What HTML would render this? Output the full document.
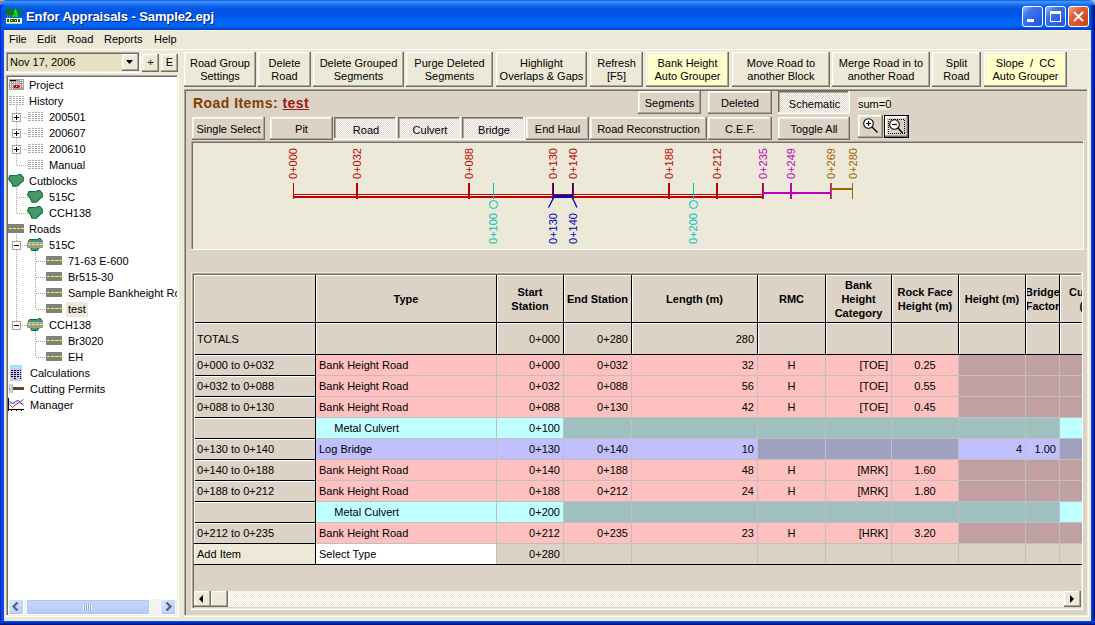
<!DOCTYPE html><html><head><meta charset="utf-8"><style>
*{box-sizing:border-box}
body{margin:0;width:1095px;height:625px;position:relative;overflow:hidden;background:#ECE9D8;font-family:"Liberation Sans",sans-serif;font-size:11px;color:#000}
.a{position:absolute}
.t{position:absolute;white-space:nowrap;line-height:13px}
.btn{position:absolute;background:#ECE9D8;box-shadow:inset -1px -1px #716F64,inset -2px -2px #ACA899,inset 1px 1px #FFFFFF,inset 2px 2px #F1EFE2;text-align:center;line-height:13px;white-space:nowrap}
.pbtn{background:#DCD2C6}
.dn{box-shadow:inset -1px -1px #FFFFFF,inset -2px -2px #F1EFE2,inset 1px 1px #716F64,inset 2px 2px #ACA899;
 background-color:#F4F2EA;background-image:repeating-conic-gradient(#FFFFFF 0 25%,#DCD2C6 0 50%);background-size:2px 2px}
.sunk{position:absolute;box-shadow:inset -1px -1px #FFFFFF,inset -2px -2px #F1EFE2,inset 1px 1px #ACA899,inset 2px 2px #716F64}
</style></head><body>

<div class="a" style="left:0;top:0;width:8px;height:8px;background:linear-gradient(#A8BCE0 0 1px,#E86838 1px)"></div>
<div class="a" style="left:1087px;top:0;width:8px;height:8px;background:#A4B4D8"></div>
<div class="a" style="left:0;top:0;width:1095px;height:30px;background:linear-gradient(#0A3FD0 0px,#3A8CFF 1px,#3D95FF 2px,#1F78F4 4px,#0A5EE6 7px,#0054E3 10px,#0055E4 16px,#0062F2 19px,#0067F8 23px,#0064F4 26px,#0050DE 28px,#003CC8 30px);border-radius:6px 6px 0 0"></div>
<div class="a" style="left:0;top:30px;width:4px;height:595px;background:linear-gradient(90deg,#0020C8 0 1px,#0848E8 1px 3px,#0050F0 3px 4px)"></div>
<div class="a" style="left:1091px;top:30px;width:4px;height:595px;background:linear-gradient(90deg,#0048E8 0 1px,#0030C8 1px 2px,#0020A8 2px 3px,#001488 3px 4px)"></div>
<div class="a" style="left:0;top:621px;width:1095px;height:4px;background:linear-gradient(#0048E8 0 1px,#0034C8 1px 2px,#0024A8 2px 3px,#001488 3px 4px)"></div>
<div class="a" style="left:0;top:5px;width:4px;height:25px;background:linear-gradient(90deg,#0028C0 0 1px,#0850E8 1px 3px,#0050E0 3px 4px)"></div>
<div class="a" style="left:1089px;top:5px;width:6px;height:25px;background:linear-gradient(90deg,rgba(0,80,230,0) 0,#0044D8 2px,#0030C0 3px,#0020A0 4px,#001888 6px)"></div>
<svg class="a" style="left:6px;top:8px" width="17" height="17" viewBox="0 0 17 17" shape-rendering="crispEdges">
<g fill="#0A7A1A"><rect x="1" y="0" width="1" height="1"/><rect x="0" y="1" width="3" height="6"/><rect x="3" y="1" width="1" height="1"/><rect x="2" y="2" width="3" height="5"/><rect x="6" y="0" width="1" height="1"/><rect x="5" y="1" width="3" height="7"/><rect x="13" y="0" width="1" height="1"/><rect x="12" y="1" width="3" height="6"/><rect x="15" y="4" width="1" height="2"/></g>
<g fill="#18D018"><rect x="9" y="1" width="1" height="1"/><rect x="8" y="2" width="3" height="6"/><rect x="10" y="5" width="2" height="4"/><rect x="6" y="7" width="2" height="2"/></g>
<g fill="#A07828"><rect x="1" y="7" width="1" height="3"/><rect x="3" y="7" width="1" height="3"/><rect x="6" y="9" width="1" height="1"/><rect x="9" y="8" width="1" height="2"/></g>
<rect x="0" y="10" width="16" height="6" fill="#FFFFFF"/><rect x="0" y="15" width="16" height="1" fill="#D8C8A8"/>
<g fill="#007A00"><rect x="1" y="11" width="2" height="3"/><rect x="4" y="11" width="7" height="3"/><rect x="12" y="11" width="2" height="3"/></g>
<rect x="5" y="12" width="1" height="1" fill="#fff"/><rect x="9" y="12" width="1" height="1" fill="#fff"/>
</svg>
<div class="t" style="left:26px;top:9px;font-size:13px;font-weight:bold;color:#fff;line-height:15px;text-shadow:1px 1px #0A1E80;letter-spacing:-0.1px">Enfor Appraisals - Sample2.epj</div>
<div class="a" style="left:1022px;top:6px;width:21px;height:21px;border:1px solid #fff;border-radius:3px;background:linear-gradient(135deg,#9DB9F9 0%,#3C75F0 30%,#2C62E8 70%,#2456D8 100%)"></div>
<div class="a" style="left:1045px;top:6px;width:21px;height:21px;border:1px solid #fff;border-radius:3px;background:linear-gradient(135deg,#9DB9F9 0%,#3C75F0 30%,#2C62E8 70%,#2456D8 100%)"></div>
<div class="a" style="left:1068px;top:6px;width:21px;height:21px;border:1px solid #fff;border-radius:3px;background:linear-gradient(135deg,#F0A088 0%,#E0603A 35%,#D84E22 70%,#C84010 100%)"></div>
<div class="a" style="left:1027px;top:19px;width:7px;height:3px;background:#fff"></div>
<div class="a" style="left:1050px;top:11px;width:11px;height:11px;border:1px solid #fff;border-top-width:3px"></div>
<svg class="a" style="left:1073px;top:11px" width="11" height="11"><path d="M1 1L10 10M10 1L1 10" stroke="#fff" stroke-width="2"/></svg>
<div class="a" style="left:4px;top:30px;width:1087px;height:1px;background:#F8F4E0"></div>
<div class="t" style="left:9px;top:33px">File</div>
<div class="t" style="left:37px;top:33px">Edit</div>
<div class="t" style="left:67px;top:33px">Road</div>
<div class="t" style="left:104px;top:33px">Reports</div>
<div class="t" style="left:154px;top:33px">Help</div>
<div class="a" style="left:4px;top:49px;width:1087px;height:1px;background:#FFFFFF"></div>
<div class="sunk" style="left:6px;top:52px;width:135px;height:21px;background:#E6E1C3"></div>
<div class="t" style="left:10px;top:56px">Nov 17, 2006</div>
<div class="btn" style="left:122px;top:54px;width:17px;height:17px"></div>
<svg class="a" style="left:126px;top:60px" width="9" height="5"><path d="M0 0H7L3.5 4Z" fill="#000"/></svg>
<div class="btn" style="left:142px;top:54px;width:17px;height:18px;line-height:16px">+</div>
<div class="btn" style="left:161px;top:54px;width:17px;height:18px;line-height:16px">E</div>
<div class="sunk" style="left:6px;top:75px;width:173px;height:542px;background:#FFFFFF"></div>
<div class="btn" style="left:184px;top:52px;width:72px;height:35px;background:#ECE9D8;padding-top:5px">Road Group<br>Settings</div>
<div class="btn" style="left:258px;top:52px;width:53px;height:35px;background:#ECE9D8;padding-top:5px">Delete<br>Road</div>
<div class="btn" style="left:313px;top:52px;width:91px;height:35px;background:#ECE9D8;padding-top:5px">Delete Grouped<br>Segments</div>
<div class="btn" style="left:406px;top:52px;width:87px;height:35px;background:#ECE9D8;padding-top:5px">Purge Deleted<br>Segments</div>
<div class="btn" style="left:496px;top:52px;width:91px;height:35px;background:#ECE9D8;padding-top:5px">Highlight<br>Overlaps &amp; Gaps</div>
<div class="btn" style="left:590px;top:52px;width:53px;height:35px;background:#ECE9D8;padding-top:5px">Refresh<br>[F5]</div>
<div class="btn" style="left:646px;top:52px;width:83px;height:35px;background:#FFFFCC;padding-top:5px">Bank Height<br>Auto Grouper</div>
<div class="btn" style="left:732px;top:52px;width:98px;height:35px;background:#ECE9D8;padding-top:5px">Move Road to<br>another Block</div>
<div class="btn" style="left:832px;top:52px;width:98px;height:35px;background:#ECE9D8;padding-top:5px">Merge Road in to<br>another Road</div>
<div class="btn" style="left:932px;top:52px;width:49px;height:35px;background:#ECE9D8;padding-top:5px">Split<br>Road</div>
<div class="btn" style="left:984px;top:52px;width:83px;height:35px;background:#FFFFCC;padding-top:5px">Slope&nbsp; /&nbsp; CC<br>Auto Grouper</div>
<div class="a" style="left:184px;top:89px;width:905px;height:528px;background:#DCD2C6;box-shadow:inset -1px -1px #FFFFFF,inset -2px -2px #F1EFE2,inset 1px 1px #ACA899,inset 2px 2px #716F64"></div>
<div class="t" style="left:193px;top:96px;font-size:14px;font-weight:bold;color:#804000;line-height:15px;letter-spacing:0.45px">Road Items: <span style="color:#A01818;text-decoration:underline">test</span></div>
<div class="btn pbtn" style="left:192px;top:117px;width:73px;height:23px;padding-top:6px;padding-left:0px">Single Select</div>
<div class="btn pbtn" style="left:270px;top:117px;width:63px;height:23px;padding-top:6px;padding-left:0px">Pit</div>
<div class="btn pbtn dn" style="left:334px;top:117px;width:63px;height:23px;padding-top:7px;padding-left:1px">Road</div>
<div class="btn pbtn dn" style="left:398px;top:117px;width:63px;height:23px;padding-top:7px;padding-left:1px">Culvert</div>
<div class="btn pbtn dn" style="left:462px;top:117px;width:63px;height:23px;padding-top:7px;padding-left:1px">Bridge</div>
<div class="btn pbtn" style="left:526px;top:117px;width:63px;height:23px;padding-top:6px;padding-left:0px">End Haul</div>
<div class="btn pbtn" style="left:590px;top:117px;width:117px;height:23px;padding-top:6px;padding-left:0px">Road Reconstruction</div>
<div class="btn pbtn" style="left:708px;top:117px;width:64px;height:23px;padding-top:6px;padding-left:0px">C.E.F.</div>
<div class="btn pbtn" style="left:778px;top:117px;width:72px;height:23px;padding-top:6px;padding-left:0px">Toggle All</div>
<div class="btn pbtn" style="left:638px;top:91px;width:63px;height:23px;padding-top:6px;padding-left:0px">Segments</div>
<div class="btn pbtn" style="left:708px;top:91px;width:64px;height:23px;padding-top:6px;padding-left:0px">Deleted</div>
<div class="btn pbtn dn" style="left:778px;top:91px;width:72px;height:23px;padding-top:7px;padding-left:1px">Schematic</div>
<div class="t" style="left:858px;top:97px;width:32px;height:13px;background:#ECE9D8;line-height:15px">sum=0</div>
<div class="btn pbtn" style="left:858px;top:115px;width:25px;height:23px"></div>
<svg class="a" style="left:858px;top:115px" width="25" height="23"><circle cx="10.5" cy="8.5" r="4.8" fill="#fff" stroke="#000" stroke-width="1.1"/><path d="M8 8.5H13M10.5 6V11" stroke="#000" stroke-width="1.2"/><path d="M14 12L19.5 17.5" stroke="#000" stroke-width="1.3"/></svg>
<div class="a" style="left:884px;top:115px;width:25px;height:23px;background:#000"></div>
<div class="btn pbtn" style="left:885px;top:116px;width:23px;height:21px"></div>
<svg class="a" style="left:884px;top:115px" width="25" height="23"><rect x="4.5" y="4.5" width="16" height="14" fill="none" stroke="#000" stroke-width="1" stroke-dasharray="1 1" shape-rendering="crispEdges"/><circle cx="10.5" cy="9.5" r="4.8" fill="#fff" stroke="#000" stroke-width="1.1"/><path d="M8 9.5H13" stroke="#000" stroke-width="1.2"/><path d="M14 13L18.5 18" stroke="#000" stroke-width="1.3"/></svg>
<div class="sunk" style="left:191px;top:141px;width:893px;height:109px;background:#ECE9D8;box-shadow:inset -1px -1px #FFFFFF,inset 1px 1px #ACA899,inset 2px 2px #716F64"></div>
<div class="a" style="left:0;top:0;width:177px;height:598px;overflow:hidden">
<svg class="a" style="left:9px;top:79px" width="15" height="11" viewBox="0 0 15 11" shape-rendering="crispEdges"><rect x="0" y="0" width="15" height="11" fill="#A4A4A4"/><rect x="11" y="1" width="1" height="1" fill="#fff"/><rect x="13" y="1" width="1" height="1" fill="#fff"/><rect x="1" y="3" width="1" height="1" fill="#fff"/><rect x="3" y="3" width="1" height="1" fill="#fff"/><rect x="5" y="3" width="1" height="1" fill="#fff"/><rect x="7" y="3" width="1" height="1" fill="#fff"/><rect x="9" y="3" width="1" height="1" fill="#fff"/><rect x="11" y="3" width="1" height="1" fill="#fff"/><rect x="13" y="3" width="1" height="1" fill="#fff"/><rect x="1" y="5" width="1" height="1" fill="#fff"/><rect x="3" y="5" width="1" height="1" fill="#fff"/><rect x="5" y="5" width="1" height="1" fill="#fff"/><rect x="7" y="5" width="1" height="1" fill="#fff"/><rect x="9" y="5" width="1" height="1" fill="#fff"/><rect x="11" y="5" width="1" height="1" fill="#fff"/><rect x="13" y="5" width="1" height="1" fill="#fff"/><rect x="1" y="7" width="1" height="1" fill="#fff"/><rect x="3" y="7" width="1" height="1" fill="#fff"/><rect x="11" y="7" width="1" height="1" fill="#fff"/><rect x="13" y="7" width="1" height="1" fill="#fff"/><rect x="1" y="9" width="1" height="1" fill="#fff"/><rect x="3" y="9" width="1" height="1" fill="#fff"/><rect x="1" y="1" width="6" height="1" fill="#000"/><rect x="5" y="6" width="5" height="3" fill="#F00000"/><rect x="4" y="7" width="1" height="1" fill="#F00000"/><rect x="10" y="7" width="1" height="1" fill="#F00000"/><rect x="7" y="7" width="1" height="1" fill="#fff"/></svg>
<div class="t" style="left:29px;top:78px;line-height:15px">Project</div>
<svg class="a" style="left:9px;top:96px" width="16" height="10" viewBox="0 0 16 10" shape-rendering="crispEdges"><rect x="0" y="0" width="3" height="1" fill="#ABABAB"/><rect x="4" y="0" width="2" height="1" fill="#ABABAB"/><rect x="7" y="0" width="2" height="1" fill="#ABABAB"/><rect x="10" y="0" width="2" height="1" fill="#ABABAB"/><rect x="13" y="0" width="2" height="1" fill="#ABABAB"/><rect x="0" y="2" width="3" height="1" fill="#ABABAB"/><rect x="4" y="2" width="2" height="1" fill="#ABABAB"/><rect x="7" y="2" width="2" height="1" fill="#ABABAB"/><rect x="10" y="2" width="2" height="1" fill="#ABABAB"/><rect x="13" y="2" width="2" height="1" fill="#ABABAB"/><rect x="0" y="4" width="3" height="1" fill="#ABABAB"/><rect x="4" y="4" width="2" height="1" fill="#ABABAB"/><rect x="7" y="4" width="2" height="1" fill="#ABABAB"/><rect x="10" y="4" width="2" height="1" fill="#ABABAB"/><rect x="13" y="4" width="2" height="1" fill="#ABABAB"/><rect x="0" y="6" width="3" height="1" fill="#ABABAB"/><rect x="4" y="6" width="2" height="1" fill="#ABABAB"/><rect x="7" y="6" width="2" height="1" fill="#ABABAB"/><rect x="10" y="6" width="2" height="1" fill="#ABABAB"/><rect x="13" y="6" width="2" height="1" fill="#ABABAB"/><rect x="0" y="8" width="3" height="1" fill="#ABABAB"/><rect x="4" y="8" width="2" height="1" fill="#ABABAB"/><rect x="7" y="8" width="2" height="1" fill="#ABABAB"/><rect x="10" y="8" width="2" height="1" fill="#ABABAB"/><rect x="13" y="8" width="2" height="1" fill="#ABABAB"/></svg>
<div class="t" style="left:29px;top:94px;line-height:15px">History</div>
<svg class="a" style="left:28px;top:112px" width="16" height="10" viewBox="0 0 16 10" shape-rendering="crispEdges"><rect x="0" y="0" width="3" height="1" fill="#ABABAB"/><rect x="4" y="0" width="2" height="1" fill="#ABABAB"/><rect x="7" y="0" width="2" height="1" fill="#ABABAB"/><rect x="10" y="0" width="2" height="1" fill="#ABABAB"/><rect x="13" y="0" width="2" height="1" fill="#ABABAB"/><rect x="0" y="2" width="3" height="1" fill="#ABABAB"/><rect x="4" y="2" width="2" height="1" fill="#ABABAB"/><rect x="7" y="2" width="2" height="1" fill="#ABABAB"/><rect x="10" y="2" width="2" height="1" fill="#ABABAB"/><rect x="13" y="2" width="2" height="1" fill="#ABABAB"/><rect x="0" y="4" width="3" height="1" fill="#ABABAB"/><rect x="4" y="4" width="2" height="1" fill="#ABABAB"/><rect x="7" y="4" width="2" height="1" fill="#ABABAB"/><rect x="10" y="4" width="2" height="1" fill="#ABABAB"/><rect x="13" y="4" width="2" height="1" fill="#ABABAB"/><rect x="0" y="6" width="3" height="1" fill="#ABABAB"/><rect x="4" y="6" width="2" height="1" fill="#ABABAB"/><rect x="7" y="6" width="2" height="1" fill="#ABABAB"/><rect x="10" y="6" width="2" height="1" fill="#ABABAB"/><rect x="13" y="6" width="2" height="1" fill="#ABABAB"/><rect x="0" y="8" width="3" height="1" fill="#ABABAB"/><rect x="4" y="8" width="2" height="1" fill="#ABABAB"/><rect x="7" y="8" width="2" height="1" fill="#ABABAB"/><rect x="10" y="8" width="2" height="1" fill="#ABABAB"/><rect x="13" y="8" width="2" height="1" fill="#ABABAB"/></svg>
<div class="t" style="left:49px;top:110px;line-height:15px">200501</div>
<svg class="a" style="left:28px;top:128px" width="16" height="10" viewBox="0 0 16 10" shape-rendering="crispEdges"><rect x="0" y="0" width="3" height="1" fill="#ABABAB"/><rect x="4" y="0" width="2" height="1" fill="#ABABAB"/><rect x="7" y="0" width="2" height="1" fill="#ABABAB"/><rect x="10" y="0" width="2" height="1" fill="#ABABAB"/><rect x="13" y="0" width="2" height="1" fill="#ABABAB"/><rect x="0" y="2" width="3" height="1" fill="#ABABAB"/><rect x="4" y="2" width="2" height="1" fill="#ABABAB"/><rect x="7" y="2" width="2" height="1" fill="#ABABAB"/><rect x="10" y="2" width="2" height="1" fill="#ABABAB"/><rect x="13" y="2" width="2" height="1" fill="#ABABAB"/><rect x="0" y="4" width="3" height="1" fill="#ABABAB"/><rect x="4" y="4" width="2" height="1" fill="#ABABAB"/><rect x="7" y="4" width="2" height="1" fill="#ABABAB"/><rect x="10" y="4" width="2" height="1" fill="#ABABAB"/><rect x="13" y="4" width="2" height="1" fill="#ABABAB"/><rect x="0" y="6" width="3" height="1" fill="#ABABAB"/><rect x="4" y="6" width="2" height="1" fill="#ABABAB"/><rect x="7" y="6" width="2" height="1" fill="#ABABAB"/><rect x="10" y="6" width="2" height="1" fill="#ABABAB"/><rect x="13" y="6" width="2" height="1" fill="#ABABAB"/><rect x="0" y="8" width="3" height="1" fill="#ABABAB"/><rect x="4" y="8" width="2" height="1" fill="#ABABAB"/><rect x="7" y="8" width="2" height="1" fill="#ABABAB"/><rect x="10" y="8" width="2" height="1" fill="#ABABAB"/><rect x="13" y="8" width="2" height="1" fill="#ABABAB"/></svg>
<div class="t" style="left:49px;top:126px;line-height:15px">200607</div>
<svg class="a" style="left:28px;top:144px" width="16" height="10" viewBox="0 0 16 10" shape-rendering="crispEdges"><rect x="0" y="0" width="3" height="1" fill="#ABABAB"/><rect x="4" y="0" width="2" height="1" fill="#ABABAB"/><rect x="7" y="0" width="2" height="1" fill="#ABABAB"/><rect x="10" y="0" width="2" height="1" fill="#ABABAB"/><rect x="13" y="0" width="2" height="1" fill="#ABABAB"/><rect x="0" y="2" width="3" height="1" fill="#ABABAB"/><rect x="4" y="2" width="2" height="1" fill="#ABABAB"/><rect x="7" y="2" width="2" height="1" fill="#ABABAB"/><rect x="10" y="2" width="2" height="1" fill="#ABABAB"/><rect x="13" y="2" width="2" height="1" fill="#ABABAB"/><rect x="0" y="4" width="3" height="1" fill="#ABABAB"/><rect x="4" y="4" width="2" height="1" fill="#ABABAB"/><rect x="7" y="4" width="2" height="1" fill="#ABABAB"/><rect x="10" y="4" width="2" height="1" fill="#ABABAB"/><rect x="13" y="4" width="2" height="1" fill="#ABABAB"/><rect x="0" y="6" width="3" height="1" fill="#ABABAB"/><rect x="4" y="6" width="2" height="1" fill="#ABABAB"/><rect x="7" y="6" width="2" height="1" fill="#ABABAB"/><rect x="10" y="6" width="2" height="1" fill="#ABABAB"/><rect x="13" y="6" width="2" height="1" fill="#ABABAB"/><rect x="0" y="8" width="3" height="1" fill="#ABABAB"/><rect x="4" y="8" width="2" height="1" fill="#ABABAB"/><rect x="7" y="8" width="2" height="1" fill="#ABABAB"/><rect x="10" y="8" width="2" height="1" fill="#ABABAB"/><rect x="13" y="8" width="2" height="1" fill="#ABABAB"/></svg>
<div class="t" style="left:49px;top:142px;line-height:15px">200610</div>
<svg class="a" style="left:28px;top:160px" width="16" height="10" viewBox="0 0 16 10" shape-rendering="crispEdges"><rect x="0" y="0" width="3" height="1" fill="#ABABAB"/><rect x="4" y="0" width="2" height="1" fill="#ABABAB"/><rect x="7" y="0" width="2" height="1" fill="#ABABAB"/><rect x="10" y="0" width="2" height="1" fill="#ABABAB"/><rect x="13" y="0" width="2" height="1" fill="#ABABAB"/><rect x="0" y="2" width="3" height="1" fill="#ABABAB"/><rect x="4" y="2" width="2" height="1" fill="#ABABAB"/><rect x="7" y="2" width="2" height="1" fill="#ABABAB"/><rect x="10" y="2" width="2" height="1" fill="#ABABAB"/><rect x="13" y="2" width="2" height="1" fill="#ABABAB"/><rect x="0" y="4" width="3" height="1" fill="#ABABAB"/><rect x="4" y="4" width="2" height="1" fill="#ABABAB"/><rect x="7" y="4" width="2" height="1" fill="#ABABAB"/><rect x="10" y="4" width="2" height="1" fill="#ABABAB"/><rect x="13" y="4" width="2" height="1" fill="#ABABAB"/><rect x="0" y="6" width="3" height="1" fill="#ABABAB"/><rect x="4" y="6" width="2" height="1" fill="#ABABAB"/><rect x="7" y="6" width="2" height="1" fill="#ABABAB"/><rect x="10" y="6" width="2" height="1" fill="#ABABAB"/><rect x="13" y="6" width="2" height="1" fill="#ABABAB"/><rect x="0" y="8" width="3" height="1" fill="#ABABAB"/><rect x="4" y="8" width="2" height="1" fill="#ABABAB"/><rect x="7" y="8" width="2" height="1" fill="#ABABAB"/><rect x="10" y="8" width="2" height="1" fill="#ABABAB"/><rect x="13" y="8" width="2" height="1" fill="#ABABAB"/></svg>
<div class="t" style="left:49px;top:158px;line-height:15px">Manual</div>
<div class="a" style="left:16px;top:106px;width:1px;height:59px;background:repeating-linear-gradient(#ACA899 0 1px,transparent 1px 2px)"></div>
<div class="a" style="left:22px;top:117px;width:6px;height:1px;background:repeating-linear-gradient(90deg,#ACA899 0 1px,transparent 1px 2px)"></div>
<div class="a" style="left:12px;top:113px;width:9px;height:9px;border:1px solid #A8A490;background:#fff"></div>
<div class="a" style="left:14px;top:117px;width:5px;height:1px;background:#000"></div>
<div class="a" style="left:16px;top:115px;width:1px;height:5px;background:#000"></div>
<div class="a" style="left:22px;top:133px;width:6px;height:1px;background:repeating-linear-gradient(90deg,#ACA899 0 1px,transparent 1px 2px)"></div>
<div class="a" style="left:12px;top:129px;width:9px;height:9px;border:1px solid #A8A490;background:#fff"></div>
<div class="a" style="left:14px;top:133px;width:5px;height:1px;background:#000"></div>
<div class="a" style="left:16px;top:131px;width:1px;height:5px;background:#000"></div>
<div class="a" style="left:22px;top:149px;width:6px;height:1px;background:repeating-linear-gradient(90deg,#ACA899 0 1px,transparent 1px 2px)"></div>
<div class="a" style="left:12px;top:145px;width:9px;height:9px;border:1px solid #A8A490;background:#fff"></div>
<div class="a" style="left:14px;top:149px;width:5px;height:1px;background:#000"></div>
<div class="a" style="left:16px;top:147px;width:1px;height:5px;background:#000"></div>
<div class="a" style="left:17px;top:165px;width:11px;height:1px;background:repeating-linear-gradient(90deg,#ACA899 0 1px,transparent 1px 2px)"></div>
<svg class="a" style="left:8px;top:174px" width="17" height="14" viewBox="0 0 17 14"><path d="M0.6 4.9 L1.8 1.6 L9.8 1.3 L10.9 0.5 L12.9 0.5 L15.3 3.4 L15.3 7 L13.3 8.3 L9.2 12.3 L5.2 12.3 L4.3 11.1 L4.6 10.3 Z" fill="#4A966C" stroke="#077534" stroke-width="1.1" stroke-linejoin="round"/></svg>
<div class="t" style="left:29px;top:174px;line-height:15px">Cutblocks</div>
<div class="a" style="left:16px;top:186px;width:1px;height:27px;background:repeating-linear-gradient(#ACA899 0 1px,transparent 1px 2px)"></div>
<div class="a" style="left:17px;top:197px;width:11px;height:1px;background:repeating-linear-gradient(90deg,#ACA899 0 1px,transparent 1px 2px)"></div>
<svg class="a" style="left:27px;top:190px" width="17" height="14" viewBox="0 0 17 14"><path d="M0.6 4.9 L1.8 1.6 L9.8 1.3 L10.9 0.5 L12.9 0.5 L15.3 3.4 L15.3 7 L13.3 8.3 L9.2 12.3 L5.2 12.3 L4.3 11.1 L4.6 10.3 Z" fill="#4A966C" stroke="#077534" stroke-width="1.1" stroke-linejoin="round"/></svg>
<div class="t" style="left:49px;top:190px;line-height:15px">515C</div>
<div class="a" style="left:17px;top:213px;width:11px;height:1px;background:repeating-linear-gradient(90deg,#ACA899 0 1px,transparent 1px 2px)"></div>
<svg class="a" style="left:27px;top:206px" width="17" height="14" viewBox="0 0 17 14"><path d="M0.6 4.9 L1.8 1.6 L9.8 1.3 L10.9 0.5 L12.9 0.5 L15.3 3.4 L15.3 7 L13.3 8.3 L9.2 12.3 L5.2 12.3 L4.3 11.1 L4.6 10.3 Z" fill="#4A966C" stroke="#077534" stroke-width="1.1" stroke-linejoin="round"/></svg>
<div class="t" style="left:49px;top:206px;line-height:15px">CCH138</div>
<svg class="a" style="left:8px;top:224px" width="16" height="9" viewBox="0 0 16 9" shape-rendering="crispEdges"><rect x="0" y="0" width="16" height="9" fill="#808080"/><rect x="1" y="4" width="3" height="1" fill="#FFFF00"/><rect x="5" y="4" width="3" height="1" fill="#FFFF00"/><rect x="9" y="4" width="3" height="1" fill="#FFFF00"/><rect x="13" y="4" width="3" height="1" fill="#FFFF00"/></svg>
<div class="t" style="left:29px;top:222px;line-height:15px">Roads</div>
<div class="a" style="left:16px;top:234px;width:1px;height:91px;background:repeating-linear-gradient(#ACA899 0 1px,transparent 1px 2px)"></div>
<div class="a" style="left:22px;top:245px;width:6px;height:1px;background:repeating-linear-gradient(90deg,#ACA899 0 1px,transparent 1px 2px)"></div>
<div class="a" style="left:12px;top:241px;width:9px;height:9px;border:1px solid #A8A490;background:#fff"></div>
<div class="a" style="left:14px;top:245px;width:5px;height:1px;background:#000"></div>
<svg class="a" style="left:27px;top:238px" width="16" height="14" viewBox="0 0 16 14"><path d="M1 4.5 L2.5 1.5 L10.5 1.5 L11.5 0.5 L13.5 0.5 L15.5 3.5 L15.5 4.5 Z" fill="#4A966C" stroke="#077534" stroke-width="1"/><path d="M3.5 9.5 L4.5 12.5 L10.5 12.5 L12.5 9.5 Z" fill="#4A966C" stroke="#077534" stroke-width="1"/><g shape-rendering="crispEdges"><rect x="0" y="4" width="16" height="6" fill="#9A9A9A"/><rect x="0" y="4" width="16" height="1" fill="#B8B8B8"/><rect x="1" y="6" width="3" height="1" fill="#FFFF00"/><rect x="5" y="6" width="3" height="1" fill="#FFFF00"/><rect x="9" y="6" width="3" height="1" fill="#FFFF00"/><rect x="13" y="6" width="3" height="1" fill="#FFFF00"/></g></svg>
<div class="t" style="left:49px;top:238px;line-height:15px">515C</div>
<div class="a" style="left:22px;top:325px;width:6px;height:1px;background:repeating-linear-gradient(90deg,#ACA899 0 1px,transparent 1px 2px)"></div>
<div class="a" style="left:12px;top:321px;width:9px;height:9px;border:1px solid #A8A490;background:#fff"></div>
<div class="a" style="left:14px;top:325px;width:5px;height:1px;background:#000"></div>
<svg class="a" style="left:27px;top:318px" width="16" height="14" viewBox="0 0 16 14"><path d="M1 4.5 L2.5 1.5 L10.5 1.5 L11.5 0.5 L13.5 0.5 L15.5 3.5 L15.5 4.5 Z" fill="#4A966C" stroke="#077534" stroke-width="1"/><path d="M3.5 9.5 L4.5 12.5 L10.5 12.5 L12.5 9.5 Z" fill="#4A966C" stroke="#077534" stroke-width="1"/><g shape-rendering="crispEdges"><rect x="0" y="4" width="16" height="6" fill="#9A9A9A"/><rect x="0" y="4" width="16" height="1" fill="#B8B8B8"/><rect x="1" y="6" width="3" height="1" fill="#FFFF00"/><rect x="5" y="6" width="3" height="1" fill="#FFFF00"/><rect x="9" y="6" width="3" height="1" fill="#FFFF00"/><rect x="13" y="6" width="3" height="1" fill="#FFFF00"/></g></svg>
<div class="t" style="left:49px;top:318px;line-height:15px">CCH138</div>
<div class="a" style="left:35px;top:251px;width:1px;height:58px;background:repeating-linear-gradient(#ACA899 0 1px,transparent 1px 2px)"></div>
<div class="a" style="left:35px;top:331px;width:1px;height:26px;background:repeating-linear-gradient(#ACA899 0 1px,transparent 1px 2px)"></div>
<div class="a" style="left:36px;top:261px;width:10px;height:1px;background:repeating-linear-gradient(90deg,#ACA899 0 1px,transparent 1px 2px)"></div>
<svg class="a" style="left:46px;top:256px" width="16" height="9" viewBox="0 0 16 9" shape-rendering="crispEdges"><rect x="0" y="0" width="16" height="9" fill="#808080"/><rect x="1" y="4" width="3" height="1" fill="#FFFF00"/><rect x="5" y="4" width="3" height="1" fill="#FFFF00"/><rect x="9" y="4" width="3" height="1" fill="#FFFF00"/><rect x="13" y="4" width="3" height="1" fill="#FFFF00"/></svg>
<div class="t" style="left:68px;top:254px;line-height:15px">71-63 E-600</div>
<div class="a" style="left:36px;top:277px;width:10px;height:1px;background:repeating-linear-gradient(90deg,#ACA899 0 1px,transparent 1px 2px)"></div>
<svg class="a" style="left:46px;top:272px" width="16" height="9" viewBox="0 0 16 9" shape-rendering="crispEdges"><rect x="0" y="0" width="16" height="9" fill="#808080"/><rect x="1" y="4" width="3" height="1" fill="#FFFF00"/><rect x="5" y="4" width="3" height="1" fill="#FFFF00"/><rect x="9" y="4" width="3" height="1" fill="#FFFF00"/><rect x="13" y="4" width="3" height="1" fill="#FFFF00"/></svg>
<div class="t" style="left:68px;top:270px;line-height:15px">Br515-30</div>
<div class="a" style="left:36px;top:293px;width:10px;height:1px;background:repeating-linear-gradient(90deg,#ACA899 0 1px,transparent 1px 2px)"></div>
<svg class="a" style="left:46px;top:288px" width="16" height="9" viewBox="0 0 16 9" shape-rendering="crispEdges"><rect x="0" y="0" width="16" height="9" fill="#808080"/><rect x="1" y="4" width="3" height="1" fill="#FFFF00"/><rect x="5" y="4" width="3" height="1" fill="#FFFF00"/><rect x="9" y="4" width="3" height="1" fill="#FFFF00"/><rect x="13" y="4" width="3" height="1" fill="#FFFF00"/></svg>
<div class="t" style="left:68px;top:286px;line-height:15px">Sample Bankheight Ro</div>
<div class="a" style="left:36px;top:309px;width:10px;height:1px;background:repeating-linear-gradient(90deg,#ACA899 0 1px,transparent 1px 2px)"></div>
<svg class="a" style="left:46px;top:304px" width="16" height="9" viewBox="0 0 16 9" shape-rendering="crispEdges"><rect x="0" y="0" width="16" height="9" fill="#808080"/><rect x="1" y="4" width="3" height="1" fill="#FFFF00"/><rect x="5" y="4" width="3" height="1" fill="#FFFF00"/><rect x="9" y="4" width="3" height="1" fill="#FFFF00"/><rect x="13" y="4" width="3" height="1" fill="#FFFF00"/></svg>
<div class="t" style="left:66px;top:302px;background:#ECE9D8;padding:0 2px;line-height:15px">test</div>
<div class="a" style="left:36px;top:341px;width:10px;height:1px;background:repeating-linear-gradient(90deg,#ACA899 0 1px,transparent 1px 2px)"></div>
<svg class="a" style="left:46px;top:336px" width="16" height="9" viewBox="0 0 16 9" shape-rendering="crispEdges"><rect x="0" y="0" width="16" height="9" fill="#808080"/><rect x="1" y="4" width="3" height="1" fill="#FFFF00"/><rect x="5" y="4" width="3" height="1" fill="#FFFF00"/><rect x="9" y="4" width="3" height="1" fill="#FFFF00"/><rect x="13" y="4" width="3" height="1" fill="#FFFF00"/></svg>
<div class="t" style="left:68px;top:334px;line-height:15px">Br3020</div>
<div class="a" style="left:36px;top:357px;width:10px;height:1px;background:repeating-linear-gradient(90deg,#ACA899 0 1px,transparent 1px 2px)"></div>
<svg class="a" style="left:46px;top:352px" width="16" height="9" viewBox="0 0 16 9" shape-rendering="crispEdges"><rect x="0" y="0" width="16" height="9" fill="#808080"/><rect x="1" y="4" width="3" height="1" fill="#FFFF00"/><rect x="5" y="4" width="3" height="1" fill="#FFFF00"/><rect x="9" y="4" width="3" height="1" fill="#FFFF00"/><rect x="13" y="4" width="3" height="1" fill="#FFFF00"/></svg>
<div class="t" style="left:68px;top:350px;line-height:15px">EH</div>
<svg class="a" style="left:10px;top:365px" width="13" height="16" viewBox="0 0 13 16" shape-rendering="crispEdges"><rect x="0" y="0" width="12" height="16" fill="#C8C8FF"/><rect x="1" y="1" width="10" height="2" fill="#90F8F8"/><rect x="1" y="5" width="2" height="1" fill="#000"/><rect x="4" y="5" width="2" height="1" fill="#000"/><rect x="7" y="5" width="2" height="1" fill="#000"/><rect x="10" y="5" width="1" height="1" fill="#000"/><rect x="1" y="7" width="2" height="1" fill="#000"/><rect x="4" y="7" width="2" height="1" fill="#000"/><rect x="7" y="7" width="2" height="1" fill="#000"/><rect x="10" y="7" width="1" height="1" fill="#000"/><rect x="1" y="9" width="2" height="1" fill="#000"/><rect x="4" y="9" width="2" height="1" fill="#000"/><rect x="7" y="9" width="2" height="1" fill="#000"/><rect x="10" y="9" width="1" height="1" fill="#000"/><rect x="1" y="11" width="2" height="1" fill="#000"/><rect x="4" y="11" width="2" height="1" fill="#000"/><rect x="7" y="11" width="2" height="1" fill="#000"/><rect x="10" y="11" width="1" height="1" fill="#000"/><rect x="4" y="13" width="2" height="1" fill="#000"/><rect x="10" y="13" width="1" height="1" fill="#000"/></svg>
<div class="t" style="left:30px;top:366px;line-height:15px">Calculations</div>
<svg class="a" style="left:9px;top:384px" width="16" height="10" viewBox="0 0 16 10" shape-rendering="crispEdges"><rect x="0" y="0" width="4" height="9" fill="#B8B8B8"/><rect x="1" y="0" width="2" height="9" fill="#D8D8D8"/><rect x="4" y="3" width="11" height="3" fill="#6B4226"/></svg>
<div class="t" style="left:30px;top:382px;line-height:15px">Cutting Permits</div>
<svg class="a" style="left:8px;top:398px" width="17" height="13" viewBox="0 0 17 13"><g shape-rendering="crispEdges"><rect x="0" y="0" width="1" height="13" fill="#000"/><rect x="0" y="11" width="16" height="1" fill="#000"/><rect x="3" y="12" width="1" height="1" fill="#000"/><rect x="8" y="12" width="1" height="1" fill="#000"/><rect x="13" y="12" width="1" height="1" fill="#000"/><rect x="1" y="5" width="15" height="1" fill="#D0D0D0"/></g><path d="M1.5 3.5 L4.5 5.5 L7.5 3.5 L10.5 2.5 L12.5 4.5 L15.5 7.5" fill="none" stroke="#2020F0" stroke-width="1"/><path d="M1.5 6.5 L4.5 9.5 L8 6.5 L10.5 4.5 L12.5 3.5 L15.5 1.5" fill="none" stroke="#F02020" stroke-width="1"/></svg>
<div class="t" style="left:30px;top:398px;line-height:15px">Manager</div>
</div>
<div class="a" style="left:8px;top:599px;width:169px;height:16px;background:#F4F3EE"></div>
<div class="a" style="left:8px;top:599px;width:16px;height:16px;border-radius:2px;background:linear-gradient(135deg,#DCE6FC,#B9CCF8);border:1px solid #fff;box-shadow:inset 0 -1px #A8BEF0"></div>
<svg class="a" style="left:11px;top:601px" width="9" height="12"><path d="M6.5 1.5 L2.5 5.5 L6.5 9.5" fill="none" stroke="#4D6185" stroke-width="2.2"/></svg>
<div class="a" style="left:26px;top:599px;width:124px;height:16px;border-radius:2px;background:linear-gradient(#C8D6FA,#B6CBF7);border:1px solid #fff;box-shadow:inset 0 0 0 1px #B0C4F0"></div>
<div class="a" style="left:83px;top:604px;width:9px;height:6px;background:repeating-linear-gradient(90deg,#EEF3FE 0 1px,#8CA8E0 1px 2px)"></div>
<div class="a" style="left:160px;top:599px;width:16px;height:16px;border-radius:2px;background:linear-gradient(135deg,#DCE6FC,#B9CCF8);border:1px solid #fff;box-shadow:inset 0 -1px #A8BEF0"></div>
<svg class="a" style="left:164px;top:601px" width="9" height="12"><path d="M2.5 1.5 L6.5 5.5 L2.5 9.5" fill="none" stroke="#4D6185" stroke-width="2.2"/></svg>
<div class="a" style="left:293px;top:194px;width:470px;height:1px;background:#C00000"></div>
<div class="a" style="left:293px;top:195px;width:470px;height:1px;background:#F4F4E8"></div>
<div class="a" style="left:293px;top:196px;width:470px;height:2px;background:#C00000"></div>
<div class="a" style="left:293px;top:183px;width:1px;height:16px;background:#C00000"></div>
<div class="t" style="left:273px;top:157px;width:40px;height:13px;text-align:center;color:#C00000;transform:rotate(-90deg);line-height:13px">0+000</div>
<div class="a" style="left:356px;top:183px;width:2px;height:16px;background:#C00000"></div>
<div class="t" style="left:337px;top:157px;width:40px;height:13px;text-align:center;color:#C00000;transform:rotate(-90deg);line-height:13px">0+032</div>
<div class="a" style="left:468px;top:183px;width:2px;height:16px;background:#C00000"></div>
<div class="t" style="left:449px;top:157px;width:40px;height:13px;text-align:center;color:#C00000;transform:rotate(-90deg);line-height:13px">0+088</div>
<div class="a" style="left:668px;top:183px;width:2px;height:16px;background:#C00000"></div>
<div class="t" style="left:649px;top:157px;width:40px;height:13px;text-align:center;color:#C00000;transform:rotate(-90deg);line-height:13px">0+188</div>
<div class="a" style="left:716px;top:183px;width:2px;height:16px;background:#C00000"></div>
<div class="t" style="left:697px;top:157px;width:40px;height:13px;text-align:center;color:#C00000;transform:rotate(-90deg);line-height:13px">0+212</div>
<div class="a" style="left:552px;top:183px;width:1px;height:16px;background:#C00000"></div>
<div class="a" style="left:573px;top:183px;width:1px;height:16px;background:#C00000"></div>
<div class="a" style="left:553px;top:183px;width:1px;height:16px;background:#0000C0"></div>
<div class="a" style="left:572px;top:183px;width:1px;height:16px;background:#0000C0"></div>
<div class="a" style="left:553px;top:195px;width:20px;height:3px;background:#0000C0"></div>
<svg class="a" style="left:545px;top:196px" width="36" height="14"><path d="M8.5 2 L3.5 11.5 M27.5 2 L32 11.5" stroke="#0000C0" stroke-width="1.3"/></svg>
<div class="t" style="left:533px;top:157px;width:40px;height:13px;text-align:center;color:#C00000;transform:rotate(-90deg);line-height:13px">0+130</div>
<div class="t" style="left:553px;top:157px;width:40px;height:13px;text-align:center;color:#C00000;transform:rotate(-90deg);line-height:13px">0+140</div>
<div class="t" style="left:533px;top:222px;width:40px;height:13px;text-align:center;color:#0000C0;transform:rotate(-90deg);line-height:13px">0+130</div>
<div class="t" style="left:553px;top:222px;width:40px;height:13px;text-align:center;color:#0000C0;transform:rotate(-90deg);line-height:13px">0+140</div>
<div class="a" style="left:493px;top:183px;width:1px;height:16px;background:#00C0C0"></div>
<svg class="a" style="left:488px;top:199px" width="11" height="11"><circle cx="5.5" cy="5.5" r="4" fill="none" stroke="#00C0C0" stroke-width="1"/></svg>
<div class="t" style="left:473px;top:222px;width:40px;height:13px;text-align:center;color:#00C0C0;transform:rotate(-90deg);line-height:13px">0+100</div>
<div class="a" style="left:693px;top:183px;width:1px;height:16px;background:#00C0C0"></div>
<svg class="a" style="left:688px;top:199px" width="11" height="11"><circle cx="5.5" cy="5.5" r="4" fill="none" stroke="#00C0C0" stroke-width="1"/></svg>
<div class="t" style="left:673px;top:222px;width:40px;height:13px;text-align:center;color:#00C0C0;transform:rotate(-90deg);line-height:13px">0+200</div>
<div class="a" style="left:763px;top:183px;width:1px;height:16px;background:#C000C0"></div>
<div class="a" style="left:762px;top:183px;width:1px;height:16px;background:#C00000"></div>
<div class="a" style="left:763px;top:192px;width:68px;height:2px;background:#C000C0"></div>
<div class="a" style="left:790px;top:183px;width:2px;height:16px;background:#C000C0"></div>
<div class="t" style="left:743px;top:157px;width:40px;height:13px;text-align:center;color:#C000C0;transform:rotate(-90deg);line-height:13px">0+235</div>
<div class="t" style="left:771px;top:157px;width:40px;height:13px;text-align:center;color:#C000C0;transform:rotate(-90deg);line-height:13px">0+249</div>
<div class="a" style="left:830px;top:183px;width:1px;height:16px;background:#C000C0"></div>
<div class="a" style="left:831px;top:183px;width:1px;height:16px;background:#A06400"></div>
<div class="a" style="left:831px;top:188px;width:22px;height:2px;background:#A06400"></div>
<div class="a" style="left:852px;top:183px;width:1px;height:16px;background:#A06400"></div>
<div class="t" style="left:811px;top:157px;width:40px;height:13px;text-align:center;color:#A06400;transform:rotate(-90deg);line-height:13px">0+269</div>
<div class="t" style="left:833px;top:157px;width:40px;height:13px;text-align:center;color:#A06400;transform:rotate(-90deg);line-height:13px">0+280</div>
<div class="a" style="left:191px;top:272px;width:892px;height:338px;box-shadow:inset -1px -1px #FFFFFF,inset -2px -2px #ECE9D8,inset 1px 1px #ECE9D8,inset 2px 2px #ACA899,inset 3px 3px #716F64;background:#DCD2C6"></div>
<div class="a" style="left:194px;top:275px;width:888px;height:290px;overflow:hidden">
<div class="a" style="left:0px;top:0px;width:888px;height:80px;background:#DCD2C6"></div>
<div class="a" style="left:0px;top:0px;width:888px;height:1px;background:#FFFFFF"></div>
<div class="a" style="left:1px;top:47px;width:887px;height:1px;background:#000"></div>
<div class="a" style="left:1px;top:48px;width:887px;height:1px;background:#FFF"></div>
<div class="a" style="left:0px;top:79px;width:888px;height:1px;background:#000"></div>
<div class="a" style="left:0px;top:80px;width:121px;height:1px;background:#FFF"></div>
<div class="a" style="left:122px;top:1px;width:180px;height:46px;overflow:hidden"><div class="a" style="left:-60px;right:-60px;top:0px;bottom:0px;display:flex;align-items:center;justify-content:center;text-align:center;line-height:14px;font-weight:bold;white-space:nowrap">Type</div></div>
<div class="a" style="left:303px;top:1px;width:66px;height:46px;overflow:hidden"><div class="a" style="left:-60px;right:-60px;top:0px;bottom:0px;display:flex;align-items:center;justify-content:center;text-align:center;line-height:14px;font-weight:bold;white-space:nowrap">Start<br>Station</div></div>
<div class="a" style="left:370px;top:1px;width:67px;height:46px;overflow:hidden"><div class="a" style="left:-60px;right:-60px;top:0px;bottom:0px;display:flex;align-items:center;justify-content:center;text-align:center;line-height:14px;font-weight:bold;white-space:nowrap">End Station</div></div>
<div class="a" style="left:438px;top:1px;width:125px;height:46px;overflow:hidden"><div class="a" style="left:-60px;right:-60px;top:0px;bottom:0px;display:flex;align-items:center;justify-content:center;text-align:center;line-height:14px;font-weight:bold;white-space:nowrap">Length (m)</div></div>
<div class="a" style="left:564px;top:1px;width:67px;height:46px;overflow:hidden"><div class="a" style="left:-60px;right:-60px;top:0px;bottom:0px;display:flex;align-items:center;justify-content:center;text-align:center;line-height:14px;font-weight:bold;white-space:nowrap">RMC</div></div>
<div class="a" style="left:632px;top:1px;width:65px;height:46px;overflow:hidden"><div class="a" style="left:-60px;right:-60px;top:0px;bottom:0px;display:flex;align-items:center;justify-content:center;text-align:center;line-height:14px;font-weight:bold;white-space:nowrap">Bank<br>Height<br>Category</div></div>
<div class="a" style="left:698px;top:1px;width:66px;height:46px;overflow:hidden"><div class="a" style="left:-60px;right:-60px;top:0px;bottom:0px;display:flex;align-items:center;justify-content:center;text-align:center;line-height:14px;font-weight:bold;white-space:nowrap">Rock Face<br>Height (m)</div></div>
<div class="a" style="left:765px;top:1px;width:66px;height:46px;overflow:hidden"><div class="a" style="left:-60px;right:-60px;top:0px;bottom:0px;display:flex;align-items:center;justify-content:center;text-align:center;line-height:14px;font-weight:bold;white-space:nowrap">Height (m)</div></div>
<div class="a" style="left:832px;top:1px;width:33px;height:46px;overflow:hidden"><div class="a" style="left:-60px;right:-60px;top:0px;bottom:0px;display:flex;align-items:center;justify-content:center;text-align:center;line-height:14px;font-weight:bold;white-space:nowrap">Bridge<br>Factor</div></div>
<div class="a" style="left:866px;top:1px;width:56px;height:46px;overflow:hidden"><div class="a" style="left:-60px;right:-60px;top:0px;bottom:0px;display:flex;align-items:center;justify-content:center;text-align:center;line-height:14px;font-weight:bold;white-space:nowrap">Culvert<br>(m)</div></div>
<div class="a" style="left:1px;top:50px;width:120px;height:29px;display:flex;align-items:center;justify-content:flex-start;padding:0 2px;line-height:13px;white-space:nowrap;overflow:hidden">TOTALS</div>
<div class="a" style="left:303px;top:50px;width:66px;height:29px;display:flex;align-items:center;justify-content:flex-end;padding:0 3px;line-height:13px;white-space:nowrap;overflow:hidden">0+000</div>
<div class="a" style="left:370px;top:50px;width:67px;height:29px;display:flex;align-items:center;justify-content:flex-end;padding:0 3px;line-height:13px;white-space:nowrap;overflow:hidden">0+280</div>
<div class="a" style="left:438px;top:50px;width:125px;height:29px;display:flex;align-items:center;justify-content:flex-end;padding:0 3px;line-height:13px;white-space:nowrap;overflow:hidden">280</div>
<div class="a" style="left:121px;top:0px;width:1px;height:80px;background:#000"></div>
<div class="a" style="left:122px;top:1px;width:1px;height:46px;background:#FFF"></div>
<div class="a" style="left:122px;top:49px;width:1px;height:30px;background:#FFF"></div>
<div class="a" style="left:302px;top:0px;width:1px;height:80px;background:#000"></div>
<div class="a" style="left:303px;top:1px;width:1px;height:46px;background:#FFF"></div>
<div class="a" style="left:303px;top:49px;width:1px;height:30px;background:#FFF"></div>
<div class="a" style="left:369px;top:0px;width:1px;height:80px;background:#000"></div>
<div class="a" style="left:370px;top:1px;width:1px;height:46px;background:#FFF"></div>
<div class="a" style="left:370px;top:49px;width:1px;height:30px;background:#FFF"></div>
<div class="a" style="left:437px;top:0px;width:1px;height:80px;background:#000"></div>
<div class="a" style="left:438px;top:1px;width:1px;height:46px;background:#FFF"></div>
<div class="a" style="left:438px;top:49px;width:1px;height:30px;background:#FFF"></div>
<div class="a" style="left:563px;top:0px;width:1px;height:80px;background:#000"></div>
<div class="a" style="left:564px;top:1px;width:1px;height:46px;background:#FFF"></div>
<div class="a" style="left:564px;top:49px;width:1px;height:30px;background:#FFF"></div>
<div class="a" style="left:631px;top:0px;width:1px;height:80px;background:#000"></div>
<div class="a" style="left:632px;top:1px;width:1px;height:46px;background:#FFF"></div>
<div class="a" style="left:632px;top:49px;width:1px;height:30px;background:#FFF"></div>
<div class="a" style="left:697px;top:0px;width:1px;height:80px;background:#000"></div>
<div class="a" style="left:698px;top:1px;width:1px;height:46px;background:#FFF"></div>
<div class="a" style="left:698px;top:49px;width:1px;height:30px;background:#FFF"></div>
<div class="a" style="left:764px;top:0px;width:1px;height:80px;background:#000"></div>
<div class="a" style="left:765px;top:1px;width:1px;height:46px;background:#FFF"></div>
<div class="a" style="left:765px;top:49px;width:1px;height:30px;background:#FFF"></div>
<div class="a" style="left:831px;top:0px;width:1px;height:80px;background:#000"></div>
<div class="a" style="left:832px;top:1px;width:1px;height:46px;background:#FFF"></div>
<div class="a" style="left:832px;top:49px;width:1px;height:30px;background:#FFF"></div>
<div class="a" style="left:865px;top:0px;width:1px;height:80px;background:#000"></div>
<div class="a" style="left:866px;top:1px;width:1px;height:46px;background:#FFF"></div>
<div class="a" style="left:866px;top:49px;width:1px;height:30px;background:#FFF"></div>
<div class="a" style="left:0px;top:80px;width:121px;height:21px;background:#DCD2C6"></div>
<div class="a" style="left:0px;top:80px;width:121px;height:1px;background:#FFF"></div>
<div class="a" style="left:122px;top:80px;width:181px;height:20px;background:#FFC0C0"></div>
<div class="a" style="left:303px;top:80px;width:67px;height:20px;background:#FFC0C0"></div>
<div class="a" style="left:370px;top:80px;width:68px;height:20px;background:#FFC0C0"></div>
<div class="a" style="left:438px;top:80px;width:126px;height:20px;background:#FFC0C0"></div>
<div class="a" style="left:564px;top:80px;width:68px;height:20px;background:#FFC0C0"></div>
<div class="a" style="left:632px;top:80px;width:66px;height:20px;background:#FFC0C0"></div>
<div class="a" style="left:698px;top:80px;width:67px;height:20px;background:#FFC0C0"></div>
<div class="a" style="left:765px;top:80px;width:67px;height:20px;background:#C0A0A0"></div>
<div class="a" style="left:832px;top:80px;width:34px;height:20px;background:#C0A0A0"></div>
<div class="a" style="left:866px;top:80px;width:57px;height:20px;background:#C0A0A0"></div>
<div class="a" style="left:0px;top:100px;width:121px;height:1px;background:#000"></div>
<div class="a" style="left:122px;top:100px;width:766px;height:1px;background:#C0C0C0"></div>
<div class="a" style="left:302px;top:80px;width:1px;height:21px;background:#C0C0C0"></div>
<div class="a" style="left:369px;top:80px;width:1px;height:21px;background:#C0C0C0"></div>
<div class="a" style="left:437px;top:80px;width:1px;height:21px;background:#C0C0C0"></div>
<div class="a" style="left:563px;top:80px;width:1px;height:21px;background:#C0C0C0"></div>
<div class="a" style="left:631px;top:80px;width:1px;height:21px;background:#C0C0C0"></div>
<div class="a" style="left:697px;top:80px;width:1px;height:21px;background:#C0C0C0"></div>
<div class="a" style="left:764px;top:80px;width:1px;height:21px;background:#C0C0C0"></div>
<div class="a" style="left:831px;top:80px;width:1px;height:21px;background:#C0C0C0"></div>
<div class="a" style="left:865px;top:80px;width:1px;height:21px;background:#C0C0C0"></div>
<div class="a" style="left:121px;top:80px;width:1px;height:21px;background:#000"></div>
<div class="a" style="left:1px;top:80px;width:120px;height:20px;display:flex;align-items:center;justify-content:flex-start;padding:0 2px;line-height:13px;white-space:nowrap;overflow:hidden">0+000 to 0+032</div>
<div class="a" style="left:122px;top:80px;width:180px;height:20px;display:flex;align-items:center;justify-content:flex-start;padding:0 3px;line-height:13px;white-space:nowrap;overflow:hidden">Bank Height Road</div>
<div class="a" style="left:303px;top:80px;width:66px;height:20px;display:flex;align-items:center;justify-content:flex-end;padding:0 3px;line-height:13px;white-space:nowrap;overflow:hidden">0+000</div>
<div class="a" style="left:370px;top:80px;width:67px;height:20px;display:flex;align-items:center;justify-content:flex-end;padding:0 3px;line-height:13px;white-space:nowrap;overflow:hidden">0+032</div>
<div class="a" style="left:438px;top:80px;width:125px;height:20px;display:flex;align-items:center;justify-content:flex-end;padding:0 3px;line-height:13px;white-space:nowrap;overflow:hidden">32</div>
<div class="a" style="left:564px;top:80px;width:67px;height:20px;overflow:hidden"><div class="a" style="left:-60px;right:-60px;top:0px;bottom:0px;display:flex;align-items:center;justify-content:center;text-align:center;line-height:13px;white-space:nowrap">H</div></div>
<div class="a" style="left:632px;top:80px;width:65px;height:20px;display:flex;align-items:center;justify-content:flex-end;padding:0 3px;line-height:13px;white-space:nowrap;overflow:hidden">[TOE]</div>
<div class="a" style="left:698px;top:80px;width:66px;height:20px;overflow:hidden"><div class="a" style="left:-60px;right:-60px;top:0px;bottom:0px;display:flex;align-items:center;justify-content:center;text-align:center;line-height:13px;white-space:nowrap">0.25</div></div>
<div class="a" style="left:0px;top:101px;width:121px;height:21px;background:#DCD2C6"></div>
<div class="a" style="left:0px;top:101px;width:121px;height:1px;background:#FFF"></div>
<div class="a" style="left:122px;top:101px;width:181px;height:20px;background:#FFC0C0"></div>
<div class="a" style="left:303px;top:101px;width:67px;height:20px;background:#FFC0C0"></div>
<div class="a" style="left:370px;top:101px;width:68px;height:20px;background:#FFC0C0"></div>
<div class="a" style="left:438px;top:101px;width:126px;height:20px;background:#FFC0C0"></div>
<div class="a" style="left:564px;top:101px;width:68px;height:20px;background:#FFC0C0"></div>
<div class="a" style="left:632px;top:101px;width:66px;height:20px;background:#FFC0C0"></div>
<div class="a" style="left:698px;top:101px;width:67px;height:20px;background:#FFC0C0"></div>
<div class="a" style="left:765px;top:101px;width:67px;height:20px;background:#C0A0A0"></div>
<div class="a" style="left:832px;top:101px;width:34px;height:20px;background:#C0A0A0"></div>
<div class="a" style="left:866px;top:101px;width:57px;height:20px;background:#C0A0A0"></div>
<div class="a" style="left:0px;top:121px;width:121px;height:1px;background:#000"></div>
<div class="a" style="left:122px;top:121px;width:766px;height:1px;background:#C0C0C0"></div>
<div class="a" style="left:302px;top:101px;width:1px;height:21px;background:#C0C0C0"></div>
<div class="a" style="left:369px;top:101px;width:1px;height:21px;background:#C0C0C0"></div>
<div class="a" style="left:437px;top:101px;width:1px;height:21px;background:#C0C0C0"></div>
<div class="a" style="left:563px;top:101px;width:1px;height:21px;background:#C0C0C0"></div>
<div class="a" style="left:631px;top:101px;width:1px;height:21px;background:#C0C0C0"></div>
<div class="a" style="left:697px;top:101px;width:1px;height:21px;background:#C0C0C0"></div>
<div class="a" style="left:764px;top:101px;width:1px;height:21px;background:#C0C0C0"></div>
<div class="a" style="left:831px;top:101px;width:1px;height:21px;background:#C0C0C0"></div>
<div class="a" style="left:865px;top:101px;width:1px;height:21px;background:#C0C0C0"></div>
<div class="a" style="left:121px;top:101px;width:1px;height:21px;background:#000"></div>
<div class="a" style="left:1px;top:101px;width:120px;height:20px;display:flex;align-items:center;justify-content:flex-start;padding:0 2px;line-height:13px;white-space:nowrap;overflow:hidden">0+032 to 0+088</div>
<div class="a" style="left:122px;top:101px;width:180px;height:20px;display:flex;align-items:center;justify-content:flex-start;padding:0 3px;line-height:13px;white-space:nowrap;overflow:hidden">Bank Height Road</div>
<div class="a" style="left:303px;top:101px;width:66px;height:20px;display:flex;align-items:center;justify-content:flex-end;padding:0 3px;line-height:13px;white-space:nowrap;overflow:hidden">0+032</div>
<div class="a" style="left:370px;top:101px;width:67px;height:20px;display:flex;align-items:center;justify-content:flex-end;padding:0 3px;line-height:13px;white-space:nowrap;overflow:hidden">0+088</div>
<div class="a" style="left:438px;top:101px;width:125px;height:20px;display:flex;align-items:center;justify-content:flex-end;padding:0 3px;line-height:13px;white-space:nowrap;overflow:hidden">56</div>
<div class="a" style="left:564px;top:101px;width:67px;height:20px;overflow:hidden"><div class="a" style="left:-60px;right:-60px;top:0px;bottom:0px;display:flex;align-items:center;justify-content:center;text-align:center;line-height:13px;white-space:nowrap">H</div></div>
<div class="a" style="left:632px;top:101px;width:65px;height:20px;display:flex;align-items:center;justify-content:flex-end;padding:0 3px;line-height:13px;white-space:nowrap;overflow:hidden">[TOE]</div>
<div class="a" style="left:698px;top:101px;width:66px;height:20px;overflow:hidden"><div class="a" style="left:-60px;right:-60px;top:0px;bottom:0px;display:flex;align-items:center;justify-content:center;text-align:center;line-height:13px;white-space:nowrap">0.55</div></div>
<div class="a" style="left:0px;top:122px;width:121px;height:21px;background:#DCD2C6"></div>
<div class="a" style="left:0px;top:122px;width:121px;height:1px;background:#FFF"></div>
<div class="a" style="left:122px;top:122px;width:181px;height:20px;background:#FFC0C0"></div>
<div class="a" style="left:303px;top:122px;width:67px;height:20px;background:#FFC0C0"></div>
<div class="a" style="left:370px;top:122px;width:68px;height:20px;background:#FFC0C0"></div>
<div class="a" style="left:438px;top:122px;width:126px;height:20px;background:#FFC0C0"></div>
<div class="a" style="left:564px;top:122px;width:68px;height:20px;background:#FFC0C0"></div>
<div class="a" style="left:632px;top:122px;width:66px;height:20px;background:#FFC0C0"></div>
<div class="a" style="left:698px;top:122px;width:67px;height:20px;background:#FFC0C0"></div>
<div class="a" style="left:765px;top:122px;width:67px;height:20px;background:#C0A0A0"></div>
<div class="a" style="left:832px;top:122px;width:34px;height:20px;background:#C0A0A0"></div>
<div class="a" style="left:866px;top:122px;width:57px;height:20px;background:#C0A0A0"></div>
<div class="a" style="left:0px;top:142px;width:121px;height:1px;background:#000"></div>
<div class="a" style="left:122px;top:142px;width:766px;height:1px;background:#C0C0C0"></div>
<div class="a" style="left:302px;top:122px;width:1px;height:21px;background:#C0C0C0"></div>
<div class="a" style="left:369px;top:122px;width:1px;height:21px;background:#C0C0C0"></div>
<div class="a" style="left:437px;top:122px;width:1px;height:21px;background:#C0C0C0"></div>
<div class="a" style="left:563px;top:122px;width:1px;height:21px;background:#C0C0C0"></div>
<div class="a" style="left:631px;top:122px;width:1px;height:21px;background:#C0C0C0"></div>
<div class="a" style="left:697px;top:122px;width:1px;height:21px;background:#C0C0C0"></div>
<div class="a" style="left:764px;top:122px;width:1px;height:21px;background:#C0C0C0"></div>
<div class="a" style="left:831px;top:122px;width:1px;height:21px;background:#C0C0C0"></div>
<div class="a" style="left:865px;top:122px;width:1px;height:21px;background:#C0C0C0"></div>
<div class="a" style="left:121px;top:122px;width:1px;height:21px;background:#000"></div>
<div class="a" style="left:1px;top:122px;width:120px;height:20px;display:flex;align-items:center;justify-content:flex-start;padding:0 2px;line-height:13px;white-space:nowrap;overflow:hidden">0+088 to 0+130</div>
<div class="a" style="left:122px;top:122px;width:180px;height:20px;display:flex;align-items:center;justify-content:flex-start;padding:0 3px;line-height:13px;white-space:nowrap;overflow:hidden">Bank Height Road</div>
<div class="a" style="left:303px;top:122px;width:66px;height:20px;display:flex;align-items:center;justify-content:flex-end;padding:0 3px;line-height:13px;white-space:nowrap;overflow:hidden">0+088</div>
<div class="a" style="left:370px;top:122px;width:67px;height:20px;display:flex;align-items:center;justify-content:flex-end;padding:0 3px;line-height:13px;white-space:nowrap;overflow:hidden">0+130</div>
<div class="a" style="left:438px;top:122px;width:125px;height:20px;display:flex;align-items:center;justify-content:flex-end;padding:0 3px;line-height:13px;white-space:nowrap;overflow:hidden">42</div>
<div class="a" style="left:564px;top:122px;width:67px;height:20px;overflow:hidden"><div class="a" style="left:-60px;right:-60px;top:0px;bottom:0px;display:flex;align-items:center;justify-content:center;text-align:center;line-height:13px;white-space:nowrap">H</div></div>
<div class="a" style="left:632px;top:122px;width:65px;height:20px;display:flex;align-items:center;justify-content:flex-end;padding:0 3px;line-height:13px;white-space:nowrap;overflow:hidden">[TOE]</div>
<div class="a" style="left:698px;top:122px;width:66px;height:20px;overflow:hidden"><div class="a" style="left:-60px;right:-60px;top:0px;bottom:0px;display:flex;align-items:center;justify-content:center;text-align:center;line-height:13px;white-space:nowrap">0.45</div></div>
<div class="a" style="left:0px;top:143px;width:121px;height:21px;background:#DCD2C6"></div>
<div class="a" style="left:0px;top:143px;width:121px;height:1px;background:#FFF"></div>
<div class="a" style="left:122px;top:143px;width:181px;height:20px;background:#C0FFFF"></div>
<div class="a" style="left:303px;top:143px;width:67px;height:20px;background:#C0FFFF"></div>
<div class="a" style="left:370px;top:143px;width:68px;height:20px;background:#A0C0C0"></div>
<div class="a" style="left:438px;top:143px;width:126px;height:20px;background:#A0C0C0"></div>
<div class="a" style="left:564px;top:143px;width:68px;height:20px;background:#A0C0C0"></div>
<div class="a" style="left:632px;top:143px;width:66px;height:20px;background:#A0C0C0"></div>
<div class="a" style="left:698px;top:143px;width:67px;height:20px;background:#A0C0C0"></div>
<div class="a" style="left:765px;top:143px;width:67px;height:20px;background:#A0C0C0"></div>
<div class="a" style="left:832px;top:143px;width:34px;height:20px;background:#A0C0C0"></div>
<div class="a" style="left:866px;top:143px;width:57px;height:20px;background:#C0FFFF"></div>
<div class="a" style="left:0px;top:163px;width:121px;height:1px;background:#000"></div>
<div class="a" style="left:122px;top:163px;width:766px;height:1px;background:#C0C0C0"></div>
<div class="a" style="left:302px;top:143px;width:1px;height:21px;background:#C0C0C0"></div>
<div class="a" style="left:369px;top:143px;width:1px;height:21px;background:#C0C0C0"></div>
<div class="a" style="left:437px;top:143px;width:1px;height:21px;background:#C0C0C0"></div>
<div class="a" style="left:563px;top:143px;width:1px;height:21px;background:#C0C0C0"></div>
<div class="a" style="left:631px;top:143px;width:1px;height:21px;background:#C0C0C0"></div>
<div class="a" style="left:697px;top:143px;width:1px;height:21px;background:#C0C0C0"></div>
<div class="a" style="left:764px;top:143px;width:1px;height:21px;background:#C0C0C0"></div>
<div class="a" style="left:831px;top:143px;width:1px;height:21px;background:#C0C0C0"></div>
<div class="a" style="left:865px;top:143px;width:1px;height:21px;background:#C0C0C0"></div>
<div class="a" style="left:121px;top:143px;width:1px;height:21px;background:#000"></div>
<div class="a" style="left:122px;top:143px;width:180px;height:20px;display:flex;align-items:center;justify-content:flex-start;padding:0 3px;line-height:13px;white-space:nowrap;overflow:hidden">&nbsp;&nbsp;&nbsp;&nbsp;&nbsp;Metal Culvert</div>
<div class="a" style="left:303px;top:143px;width:66px;height:20px;display:flex;align-items:center;justify-content:flex-end;padding:0 3px;line-height:13px;white-space:nowrap;overflow:hidden">0+100</div>
<div class="a" style="left:0px;top:164px;width:121px;height:21px;background:#DCD2C6"></div>
<div class="a" style="left:0px;top:164px;width:121px;height:1px;background:#FFF"></div>
<div class="a" style="left:122px;top:164px;width:181px;height:20px;background:#C0C0FF"></div>
<div class="a" style="left:303px;top:164px;width:67px;height:20px;background:#C0C0FF"></div>
<div class="a" style="left:370px;top:164px;width:68px;height:20px;background:#C0C0FF"></div>
<div class="a" style="left:438px;top:164px;width:126px;height:20px;background:#C0C0FF"></div>
<div class="a" style="left:564px;top:164px;width:68px;height:20px;background:#A0A0C0"></div>
<div class="a" style="left:632px;top:164px;width:66px;height:20px;background:#A0A0C0"></div>
<div class="a" style="left:698px;top:164px;width:67px;height:20px;background:#A0A0C0"></div>
<div class="a" style="left:765px;top:164px;width:67px;height:20px;background:#C0C0FF"></div>
<div class="a" style="left:832px;top:164px;width:34px;height:20px;background:#C0C0FF"></div>
<div class="a" style="left:866px;top:164px;width:57px;height:20px;background:#A0A0C0"></div>
<div class="a" style="left:0px;top:184px;width:121px;height:1px;background:#000"></div>
<div class="a" style="left:122px;top:184px;width:766px;height:1px;background:#C0C0C0"></div>
<div class="a" style="left:302px;top:164px;width:1px;height:21px;background:#C0C0C0"></div>
<div class="a" style="left:369px;top:164px;width:1px;height:21px;background:#C0C0C0"></div>
<div class="a" style="left:437px;top:164px;width:1px;height:21px;background:#C0C0C0"></div>
<div class="a" style="left:563px;top:164px;width:1px;height:21px;background:#C0C0C0"></div>
<div class="a" style="left:631px;top:164px;width:1px;height:21px;background:#C0C0C0"></div>
<div class="a" style="left:697px;top:164px;width:1px;height:21px;background:#C0C0C0"></div>
<div class="a" style="left:764px;top:164px;width:1px;height:21px;background:#C0C0C0"></div>
<div class="a" style="left:831px;top:164px;width:1px;height:21px;background:#C0C0C0"></div>
<div class="a" style="left:865px;top:164px;width:1px;height:21px;background:#C0C0C0"></div>
<div class="a" style="left:121px;top:164px;width:1px;height:21px;background:#000"></div>
<div class="a" style="left:1px;top:164px;width:120px;height:20px;display:flex;align-items:center;justify-content:flex-start;padding:0 2px;line-height:13px;white-space:nowrap;overflow:hidden">0+130 to 0+140</div>
<div class="a" style="left:122px;top:164px;width:180px;height:20px;display:flex;align-items:center;justify-content:flex-start;padding:0 3px;line-height:13px;white-space:nowrap;overflow:hidden">Log Bridge</div>
<div class="a" style="left:303px;top:164px;width:66px;height:20px;display:flex;align-items:center;justify-content:flex-end;padding:0 3px;line-height:13px;white-space:nowrap;overflow:hidden">0+130</div>
<div class="a" style="left:370px;top:164px;width:67px;height:20px;display:flex;align-items:center;justify-content:flex-end;padding:0 3px;line-height:13px;white-space:nowrap;overflow:hidden">0+140</div>
<div class="a" style="left:438px;top:164px;width:125px;height:20px;display:flex;align-items:center;justify-content:flex-end;padding:0 3px;line-height:13px;white-space:nowrap;overflow:hidden">10</div>
<div class="a" style="left:765px;top:164px;width:66px;height:20px;display:flex;align-items:center;justify-content:flex-end;padding:0 3px;line-height:13px;white-space:nowrap;overflow:hidden">4</div>
<div class="a" style="left:832px;top:164px;width:33px;height:20px;display:flex;align-items:center;justify-content:flex-end;padding:0 3px;line-height:13px;white-space:nowrap;overflow:hidden">1.00</div>
<div class="a" style="left:0px;top:185px;width:121px;height:21px;background:#DCD2C6"></div>
<div class="a" style="left:0px;top:185px;width:121px;height:1px;background:#FFF"></div>
<div class="a" style="left:122px;top:185px;width:181px;height:20px;background:#FFC0C0"></div>
<div class="a" style="left:303px;top:185px;width:67px;height:20px;background:#FFC0C0"></div>
<div class="a" style="left:370px;top:185px;width:68px;height:20px;background:#FFC0C0"></div>
<div class="a" style="left:438px;top:185px;width:126px;height:20px;background:#FFC0C0"></div>
<div class="a" style="left:564px;top:185px;width:68px;height:20px;background:#FFC0C0"></div>
<div class="a" style="left:632px;top:185px;width:66px;height:20px;background:#FFC0C0"></div>
<div class="a" style="left:698px;top:185px;width:67px;height:20px;background:#FFC0C0"></div>
<div class="a" style="left:765px;top:185px;width:67px;height:20px;background:#C0A0A0"></div>
<div class="a" style="left:832px;top:185px;width:34px;height:20px;background:#C0A0A0"></div>
<div class="a" style="left:866px;top:185px;width:57px;height:20px;background:#C0A0A0"></div>
<div class="a" style="left:0px;top:205px;width:121px;height:1px;background:#000"></div>
<div class="a" style="left:122px;top:205px;width:766px;height:1px;background:#C0C0C0"></div>
<div class="a" style="left:302px;top:185px;width:1px;height:21px;background:#C0C0C0"></div>
<div class="a" style="left:369px;top:185px;width:1px;height:21px;background:#C0C0C0"></div>
<div class="a" style="left:437px;top:185px;width:1px;height:21px;background:#C0C0C0"></div>
<div class="a" style="left:563px;top:185px;width:1px;height:21px;background:#C0C0C0"></div>
<div class="a" style="left:631px;top:185px;width:1px;height:21px;background:#C0C0C0"></div>
<div class="a" style="left:697px;top:185px;width:1px;height:21px;background:#C0C0C0"></div>
<div class="a" style="left:764px;top:185px;width:1px;height:21px;background:#C0C0C0"></div>
<div class="a" style="left:831px;top:185px;width:1px;height:21px;background:#C0C0C0"></div>
<div class="a" style="left:865px;top:185px;width:1px;height:21px;background:#C0C0C0"></div>
<div class="a" style="left:121px;top:185px;width:1px;height:21px;background:#000"></div>
<div class="a" style="left:1px;top:185px;width:120px;height:20px;display:flex;align-items:center;justify-content:flex-start;padding:0 2px;line-height:13px;white-space:nowrap;overflow:hidden">0+140 to 0+188</div>
<div class="a" style="left:122px;top:185px;width:180px;height:20px;display:flex;align-items:center;justify-content:flex-start;padding:0 3px;line-height:13px;white-space:nowrap;overflow:hidden">Bank Height Road</div>
<div class="a" style="left:303px;top:185px;width:66px;height:20px;display:flex;align-items:center;justify-content:flex-end;padding:0 3px;line-height:13px;white-space:nowrap;overflow:hidden">0+140</div>
<div class="a" style="left:370px;top:185px;width:67px;height:20px;display:flex;align-items:center;justify-content:flex-end;padding:0 3px;line-height:13px;white-space:nowrap;overflow:hidden">0+188</div>
<div class="a" style="left:438px;top:185px;width:125px;height:20px;display:flex;align-items:center;justify-content:flex-end;padding:0 3px;line-height:13px;white-space:nowrap;overflow:hidden">48</div>
<div class="a" style="left:564px;top:185px;width:67px;height:20px;overflow:hidden"><div class="a" style="left:-60px;right:-60px;top:0px;bottom:0px;display:flex;align-items:center;justify-content:center;text-align:center;line-height:13px;white-space:nowrap">H</div></div>
<div class="a" style="left:632px;top:185px;width:65px;height:20px;display:flex;align-items:center;justify-content:flex-end;padding:0 3px;line-height:13px;white-space:nowrap;overflow:hidden">[MRK]</div>
<div class="a" style="left:698px;top:185px;width:66px;height:20px;overflow:hidden"><div class="a" style="left:-60px;right:-60px;top:0px;bottom:0px;display:flex;align-items:center;justify-content:center;text-align:center;line-height:13px;white-space:nowrap">1.60</div></div>
<div class="a" style="left:0px;top:206px;width:121px;height:21px;background:#DCD2C6"></div>
<div class="a" style="left:0px;top:206px;width:121px;height:1px;background:#FFF"></div>
<div class="a" style="left:122px;top:206px;width:181px;height:20px;background:#FFC0C0"></div>
<div class="a" style="left:303px;top:206px;width:67px;height:20px;background:#FFC0C0"></div>
<div class="a" style="left:370px;top:206px;width:68px;height:20px;background:#FFC0C0"></div>
<div class="a" style="left:438px;top:206px;width:126px;height:20px;background:#FFC0C0"></div>
<div class="a" style="left:564px;top:206px;width:68px;height:20px;background:#FFC0C0"></div>
<div class="a" style="left:632px;top:206px;width:66px;height:20px;background:#FFC0C0"></div>
<div class="a" style="left:698px;top:206px;width:67px;height:20px;background:#FFC0C0"></div>
<div class="a" style="left:765px;top:206px;width:67px;height:20px;background:#C0A0A0"></div>
<div class="a" style="left:832px;top:206px;width:34px;height:20px;background:#C0A0A0"></div>
<div class="a" style="left:866px;top:206px;width:57px;height:20px;background:#C0A0A0"></div>
<div class="a" style="left:0px;top:226px;width:121px;height:1px;background:#000"></div>
<div class="a" style="left:122px;top:226px;width:766px;height:1px;background:#C0C0C0"></div>
<div class="a" style="left:302px;top:206px;width:1px;height:21px;background:#C0C0C0"></div>
<div class="a" style="left:369px;top:206px;width:1px;height:21px;background:#C0C0C0"></div>
<div class="a" style="left:437px;top:206px;width:1px;height:21px;background:#C0C0C0"></div>
<div class="a" style="left:563px;top:206px;width:1px;height:21px;background:#C0C0C0"></div>
<div class="a" style="left:631px;top:206px;width:1px;height:21px;background:#C0C0C0"></div>
<div class="a" style="left:697px;top:206px;width:1px;height:21px;background:#C0C0C0"></div>
<div class="a" style="left:764px;top:206px;width:1px;height:21px;background:#C0C0C0"></div>
<div class="a" style="left:831px;top:206px;width:1px;height:21px;background:#C0C0C0"></div>
<div class="a" style="left:865px;top:206px;width:1px;height:21px;background:#C0C0C0"></div>
<div class="a" style="left:121px;top:206px;width:1px;height:21px;background:#000"></div>
<div class="a" style="left:1px;top:206px;width:120px;height:20px;display:flex;align-items:center;justify-content:flex-start;padding:0 2px;line-height:13px;white-space:nowrap;overflow:hidden">0+188 to 0+212</div>
<div class="a" style="left:122px;top:206px;width:180px;height:20px;display:flex;align-items:center;justify-content:flex-start;padding:0 3px;line-height:13px;white-space:nowrap;overflow:hidden">Bank Height Road</div>
<div class="a" style="left:303px;top:206px;width:66px;height:20px;display:flex;align-items:center;justify-content:flex-end;padding:0 3px;line-height:13px;white-space:nowrap;overflow:hidden">0+188</div>
<div class="a" style="left:370px;top:206px;width:67px;height:20px;display:flex;align-items:center;justify-content:flex-end;padding:0 3px;line-height:13px;white-space:nowrap;overflow:hidden">0+212</div>
<div class="a" style="left:438px;top:206px;width:125px;height:20px;display:flex;align-items:center;justify-content:flex-end;padding:0 3px;line-height:13px;white-space:nowrap;overflow:hidden">24</div>
<div class="a" style="left:564px;top:206px;width:67px;height:20px;overflow:hidden"><div class="a" style="left:-60px;right:-60px;top:0px;bottom:0px;display:flex;align-items:center;justify-content:center;text-align:center;line-height:13px;white-space:nowrap">H</div></div>
<div class="a" style="left:632px;top:206px;width:65px;height:20px;display:flex;align-items:center;justify-content:flex-end;padding:0 3px;line-height:13px;white-space:nowrap;overflow:hidden">[MRK]</div>
<div class="a" style="left:698px;top:206px;width:66px;height:20px;overflow:hidden"><div class="a" style="left:-60px;right:-60px;top:0px;bottom:0px;display:flex;align-items:center;justify-content:center;text-align:center;line-height:13px;white-space:nowrap">1.80</div></div>
<div class="a" style="left:0px;top:227px;width:121px;height:21px;background:#DCD2C6"></div>
<div class="a" style="left:0px;top:227px;width:121px;height:1px;background:#FFF"></div>
<div class="a" style="left:122px;top:227px;width:181px;height:20px;background:#C0FFFF"></div>
<div class="a" style="left:303px;top:227px;width:67px;height:20px;background:#C0FFFF"></div>
<div class="a" style="left:370px;top:227px;width:68px;height:20px;background:#A0C0C0"></div>
<div class="a" style="left:438px;top:227px;width:126px;height:20px;background:#A0C0C0"></div>
<div class="a" style="left:564px;top:227px;width:68px;height:20px;background:#A0C0C0"></div>
<div class="a" style="left:632px;top:227px;width:66px;height:20px;background:#A0C0C0"></div>
<div class="a" style="left:698px;top:227px;width:67px;height:20px;background:#A0C0C0"></div>
<div class="a" style="left:765px;top:227px;width:67px;height:20px;background:#A0C0C0"></div>
<div class="a" style="left:832px;top:227px;width:34px;height:20px;background:#A0C0C0"></div>
<div class="a" style="left:866px;top:227px;width:57px;height:20px;background:#C0FFFF"></div>
<div class="a" style="left:0px;top:247px;width:121px;height:1px;background:#000"></div>
<div class="a" style="left:122px;top:247px;width:766px;height:1px;background:#C0C0C0"></div>
<div class="a" style="left:302px;top:227px;width:1px;height:21px;background:#C0C0C0"></div>
<div class="a" style="left:369px;top:227px;width:1px;height:21px;background:#C0C0C0"></div>
<div class="a" style="left:437px;top:227px;width:1px;height:21px;background:#C0C0C0"></div>
<div class="a" style="left:563px;top:227px;width:1px;height:21px;background:#C0C0C0"></div>
<div class="a" style="left:631px;top:227px;width:1px;height:21px;background:#C0C0C0"></div>
<div class="a" style="left:697px;top:227px;width:1px;height:21px;background:#C0C0C0"></div>
<div class="a" style="left:764px;top:227px;width:1px;height:21px;background:#C0C0C0"></div>
<div class="a" style="left:831px;top:227px;width:1px;height:21px;background:#C0C0C0"></div>
<div class="a" style="left:865px;top:227px;width:1px;height:21px;background:#C0C0C0"></div>
<div class="a" style="left:121px;top:227px;width:1px;height:21px;background:#000"></div>
<div class="a" style="left:122px;top:227px;width:180px;height:20px;display:flex;align-items:center;justify-content:flex-start;padding:0 3px;line-height:13px;white-space:nowrap;overflow:hidden">&nbsp;&nbsp;&nbsp;&nbsp;&nbsp;Metal Culvert</div>
<div class="a" style="left:303px;top:227px;width:66px;height:20px;display:flex;align-items:center;justify-content:flex-end;padding:0 3px;line-height:13px;white-space:nowrap;overflow:hidden">0+200</div>
<div class="a" style="left:0px;top:248px;width:121px;height:21px;background:#DCD2C6"></div>
<div class="a" style="left:0px;top:248px;width:121px;height:1px;background:#FFF"></div>
<div class="a" style="left:122px;top:248px;width:181px;height:20px;background:#FFC0C0"></div>
<div class="a" style="left:303px;top:248px;width:67px;height:20px;background:#FFC0C0"></div>
<div class="a" style="left:370px;top:248px;width:68px;height:20px;background:#FFC0C0"></div>
<div class="a" style="left:438px;top:248px;width:126px;height:20px;background:#FFC0C0"></div>
<div class="a" style="left:564px;top:248px;width:68px;height:20px;background:#FFC0C0"></div>
<div class="a" style="left:632px;top:248px;width:66px;height:20px;background:#FFC0C0"></div>
<div class="a" style="left:698px;top:248px;width:67px;height:20px;background:#FFC0C0"></div>
<div class="a" style="left:765px;top:248px;width:67px;height:20px;background:#C0A0A0"></div>
<div class="a" style="left:832px;top:248px;width:34px;height:20px;background:#C0A0A0"></div>
<div class="a" style="left:866px;top:248px;width:57px;height:20px;background:#C0A0A0"></div>
<div class="a" style="left:0px;top:268px;width:121px;height:1px;background:#000"></div>
<div class="a" style="left:122px;top:268px;width:766px;height:1px;background:#C0C0C0"></div>
<div class="a" style="left:302px;top:248px;width:1px;height:21px;background:#C0C0C0"></div>
<div class="a" style="left:369px;top:248px;width:1px;height:21px;background:#C0C0C0"></div>
<div class="a" style="left:437px;top:248px;width:1px;height:21px;background:#C0C0C0"></div>
<div class="a" style="left:563px;top:248px;width:1px;height:21px;background:#C0C0C0"></div>
<div class="a" style="left:631px;top:248px;width:1px;height:21px;background:#C0C0C0"></div>
<div class="a" style="left:697px;top:248px;width:1px;height:21px;background:#C0C0C0"></div>
<div class="a" style="left:764px;top:248px;width:1px;height:21px;background:#C0C0C0"></div>
<div class="a" style="left:831px;top:248px;width:1px;height:21px;background:#C0C0C0"></div>
<div class="a" style="left:865px;top:248px;width:1px;height:21px;background:#C0C0C0"></div>
<div class="a" style="left:121px;top:248px;width:1px;height:21px;background:#000"></div>
<div class="a" style="left:1px;top:248px;width:120px;height:20px;display:flex;align-items:center;justify-content:flex-start;padding:0 2px;line-height:13px;white-space:nowrap;overflow:hidden">0+212 to 0+235</div>
<div class="a" style="left:122px;top:248px;width:180px;height:20px;display:flex;align-items:center;justify-content:flex-start;padding:0 3px;line-height:13px;white-space:nowrap;overflow:hidden">Bank Height Road</div>
<div class="a" style="left:303px;top:248px;width:66px;height:20px;display:flex;align-items:center;justify-content:flex-end;padding:0 3px;line-height:13px;white-space:nowrap;overflow:hidden">0+212</div>
<div class="a" style="left:370px;top:248px;width:67px;height:20px;display:flex;align-items:center;justify-content:flex-end;padding:0 3px;line-height:13px;white-space:nowrap;overflow:hidden">0+235</div>
<div class="a" style="left:438px;top:248px;width:125px;height:20px;display:flex;align-items:center;justify-content:flex-end;padding:0 3px;line-height:13px;white-space:nowrap;overflow:hidden">23</div>
<div class="a" style="left:564px;top:248px;width:67px;height:20px;overflow:hidden"><div class="a" style="left:-60px;right:-60px;top:0px;bottom:0px;display:flex;align-items:center;justify-content:center;text-align:center;line-height:13px;white-space:nowrap">H</div></div>
<div class="a" style="left:632px;top:248px;width:65px;height:20px;display:flex;align-items:center;justify-content:flex-end;padding:0 3px;line-height:13px;white-space:nowrap;overflow:hidden">[HRK]</div>
<div class="a" style="left:698px;top:248px;width:66px;height:20px;overflow:hidden"><div class="a" style="left:-60px;right:-60px;top:0px;bottom:0px;display:flex;align-items:center;justify-content:center;text-align:center;line-height:13px;white-space:nowrap">3.20</div></div>
<div class="a" style="left:0px;top:0px;width:1px;height:290px;background:#FFF"></div>
<div class="a" style="left:0px;top:268px;width:121px;height:1px;background:#000"></div>
<div class="a" style="left:122px;top:268px;width:766px;height:1px;background:#C0C0C0"></div>
<div class="a" style="left:1px;top:269px;width:120px;height:20px;background:#ECE9D8"></div>
<div class="a" style="left:122px;top:269px;width:180px;height:20px;background:#FFFFFF"></div>
<div class="a" style="left:303px;top:269px;width:585px;height:20px;background:#DCD2C6"></div>
<div class="a" style="left:302px;top:269px;width:1px;height:20px;background:#C0C0C0"></div>
<div class="a" style="left:369px;top:269px;width:1px;height:20px;background:#C0C0C0"></div>
<div class="a" style="left:437px;top:269px;width:1px;height:20px;background:#C0C0C0"></div>
<div class="a" style="left:563px;top:269px;width:1px;height:20px;background:#C0C0C0"></div>
<div class="a" style="left:631px;top:269px;width:1px;height:20px;background:#C0C0C0"></div>
<div class="a" style="left:697px;top:269px;width:1px;height:20px;background:#C0C0C0"></div>
<div class="a" style="left:764px;top:269px;width:1px;height:20px;background:#C0C0C0"></div>
<div class="a" style="left:831px;top:269px;width:1px;height:20px;background:#C0C0C0"></div>
<div class="a" style="left:865px;top:269px;width:1px;height:20px;background:#C0C0C0"></div>
<div class="a" style="left:121px;top:268px;width:1px;height:21px;background:#000"></div>
<div class="a" style="left:1px;top:269px;width:120px;height:20px;display:flex;align-items:center;justify-content:flex-start;padding:0 2px;line-height:13px;white-space:nowrap;overflow:hidden">Add Item</div>
<div class="a" style="left:122px;top:269px;width:180px;height:20px;display:flex;align-items:center;justify-content:flex-start;padding:0 3px;line-height:13px;white-space:nowrap;overflow:hidden">Select Type</div>
<div class="a" style="left:303px;top:269px;width:66px;height:20px;display:flex;align-items:center;justify-content:flex-end;padding:0 3px;line-height:13px;white-space:nowrap;overflow:hidden">0+280</div>
<div class="a" style="left:0px;top:289px;width:888px;height:1px;background:#000"></div>
</div>
<div class="a" style="left:194px;top:591px;width:887px;height:16px;background-image:repeating-conic-gradient(#FFFFFF 0 25%,#ECE9D8 0 50%);background-size:2px 2px"></div>
<div class="btn" style="left:194px;top:591px;width:17px;height:16px"></div>
<svg class="a" style="left:199px;top:595px" width="5" height="8"><path d="M4 0V8L0 4Z" fill="#000"/></svg>
<div class="btn" style="left:211px;top:591px;width:17px;height:16px"></div>
<div class="btn" style="left:1064px;top:591px;width:17px;height:16px"></div>
<svg class="a" style="left:1070px;top:595px" width="5" height="8"><path d="M0 0V8L4 4Z" fill="#000"/></svg>
</body></html>
